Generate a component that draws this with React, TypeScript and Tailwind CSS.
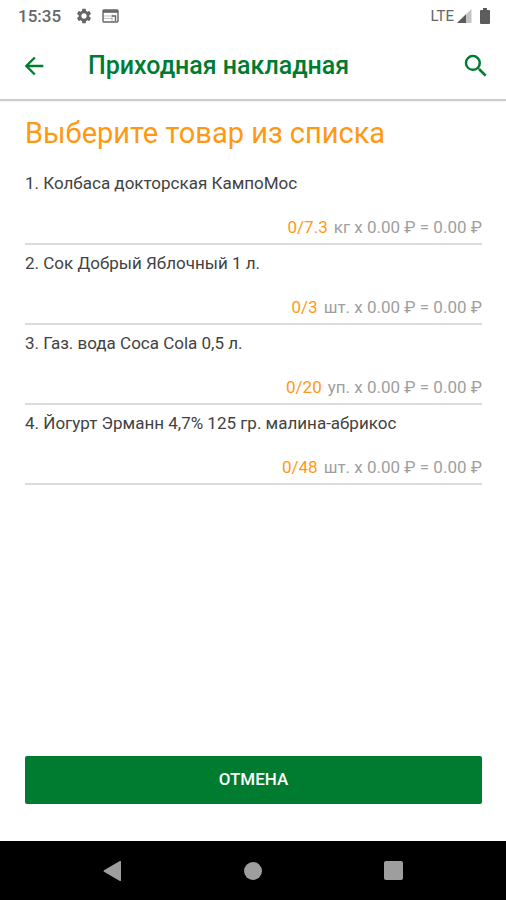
import { MdArrowBack, MdSearch, MdSettings } from "react-icons/md";

type Item = {
  id: number;
  name: string;
  accepted: string;
  unit: string;
  price: string;
  total: string;
};

const items: Item[] = [
  { id: 1, name: "Колбаса докторская КампоМос", accepted: "0/7.3", unit: "кг", price: "0.00 ₽", total: "0.00 ₽" },
  { id: 2, name: "Сок Добрый Яблочный 1 л.", accepted: "0/3", unit: "шт.", price: "0.00 ₽", total: "0.00 ₽" },
  { id: 3, name: "Газ. вода Coca Cola 0,5 л.", accepted: "0/20", unit: "уп.", price: "0.00 ₽", total: "0.00 ₽" },
  { id: 4, name: "Йогурт Эрманн 4,7% 125 гр. малина-абрикос", accepted: "0/48", unit: "шт.", price: "0.00 ₽", total: "0.00 ₽" },
];

function StatusBar() {
  return (
    <div className="flex h-8 items-center justify-between pr-4 pl-[18px] text-[#666666]">
      <div className="flex items-center">
        <span className="text-[17px] leading-6 font-medium">15:35</span>
        <MdSettings className="ml-3.5 size-[18px]" />
        <svg viewBox="0 0 18 16" className="ml-2 h-4 w-[18px]" fill="none" stroke="currentColor">
          <rect x="2" y="2" width="15" height="12" rx="1" strokeWidth="1.4" />
          <path d="M2 3.5h15" strokeWidth="2.6" />
          <path d="M2 8h9.500M2 10.500h9.500M11 6.500V14" strokeWidth="0.8" opacity="0.5" />
          <path d="M11 8h3.500v5" strokeWidth="1.4" />
        </svg>
      </div>
      <div className="flex items-center">
        <span className="text-[15px] leading-6">LTE</span>
        {/* Signal strength */}
        <svg viewBox="0 0 16 16" className="ml-0.5 size-4">
          <path d="M15.500 1v14H1z" fill="#c4c4c4" />
          <path d="M10 6.300V15H1z" fill="#5c5c5c" />
        </svg>
        <svg viewBox="0 0 10 16" className="ml-2 h-4 w-2.5" fill="#5c5c5c">
          <path d="M3 0h4v2h2a1 1 0 0 1 1 1v12a1 1 0 0 1-1 1H1a1 1 0 0 1-1-1V3a1 1 0 0 1 1-1h2z" />
        </svg>
      </div>
    </div>
  );
}

function ItemRow({ item }: { item: Item }) {
  return (
    <li className="flex h-20 flex-col justify-between border-b-2 border-[#dcdcdc] pt-1.5 pb-1">
      <p className="text-[17px] leading-6 text-[#424242]">
        {item.id}. {item.name}
      </p>
      <p className="flex justify-end gap-1.5 text-[17px] leading-6 text-[#a0a0a0]">
        <span className="text-[#ff9914]">{item.accepted}</span>
        <span>
          {item.unit} x {item.price} = {item.total}
        </span>
      </p>
    </li>
  );
}

function NavBar() {
  return (
    <nav className="grid h-[59px] grid-cols-3 items-center bg-black px-[43px] text-[#9e9e9e]">
      <button type="button" aria-label="Назад" className="flex justify-center">
        <svg viewBox="0 0 20 20" className="size-5" fill="currentColor">
          <path d="M18 0.8v18.4a.8.8 0 0 1-1.2.7L1 10.7a.8.8 0 0 1 0-1.4L16.8.1A.8.8 0 0 1 18 .8z" />
        </svg>
      </button>
      <button type="button" aria-label="Домой" className="flex justify-center">
        <span className="size-[18px] rounded-full bg-[#9e9e9e]" />
      </button>
      <button type="button" aria-label="Недавние" className="flex justify-center">
        <span className="size-[19px] rounded-xs bg-[#9e9e9e]" />
      </button>
    </nav>
  );
}

export default function App() {
  return (
    <div className="flex min-h-screen flex-col bg-white font-[Roboto,sans-serif]">
      <StatusBar />
      <header className="flex h-[69px] items-center border-b-2 border-[#cccccc] px-4 text-[#007c30] shadow-xs">
        <button type="button" aria-label="Назад" className="flex size-9 items-center justify-center">
          <MdArrowBack className="size-7" />
        </button>
        <h1 className="ml-9 flex-1 text-[25px] leading-8 font-medium">Приходная накладная</h1>
        <button type="button" aria-label="Поиск" className="flex size-7 items-center justify-center">
          <MdSearch className="size-[30px] shrink-0" />
        </button>
      </header>
      <main className="flex flex-1 flex-col pt-3.5 pr-6 pb-[37px] pl-[25px]">
        <h2 className="mb-3.5 text-[29px] leading-9 text-[#ff9914]">Выберите товар из списка</h2>
        <ul>
          {items.map((item) => (
            <ItemRow key={item.id} item={item} />
          ))}
        </ul>
        <button type="button" className="mt-auto h-12 rounded-xs bg-[#007c30] text-[17px] font-medium text-white">
          ОТМЕНА
        </button>
      </main>
      <NavBar />
    </div>
  );
}
